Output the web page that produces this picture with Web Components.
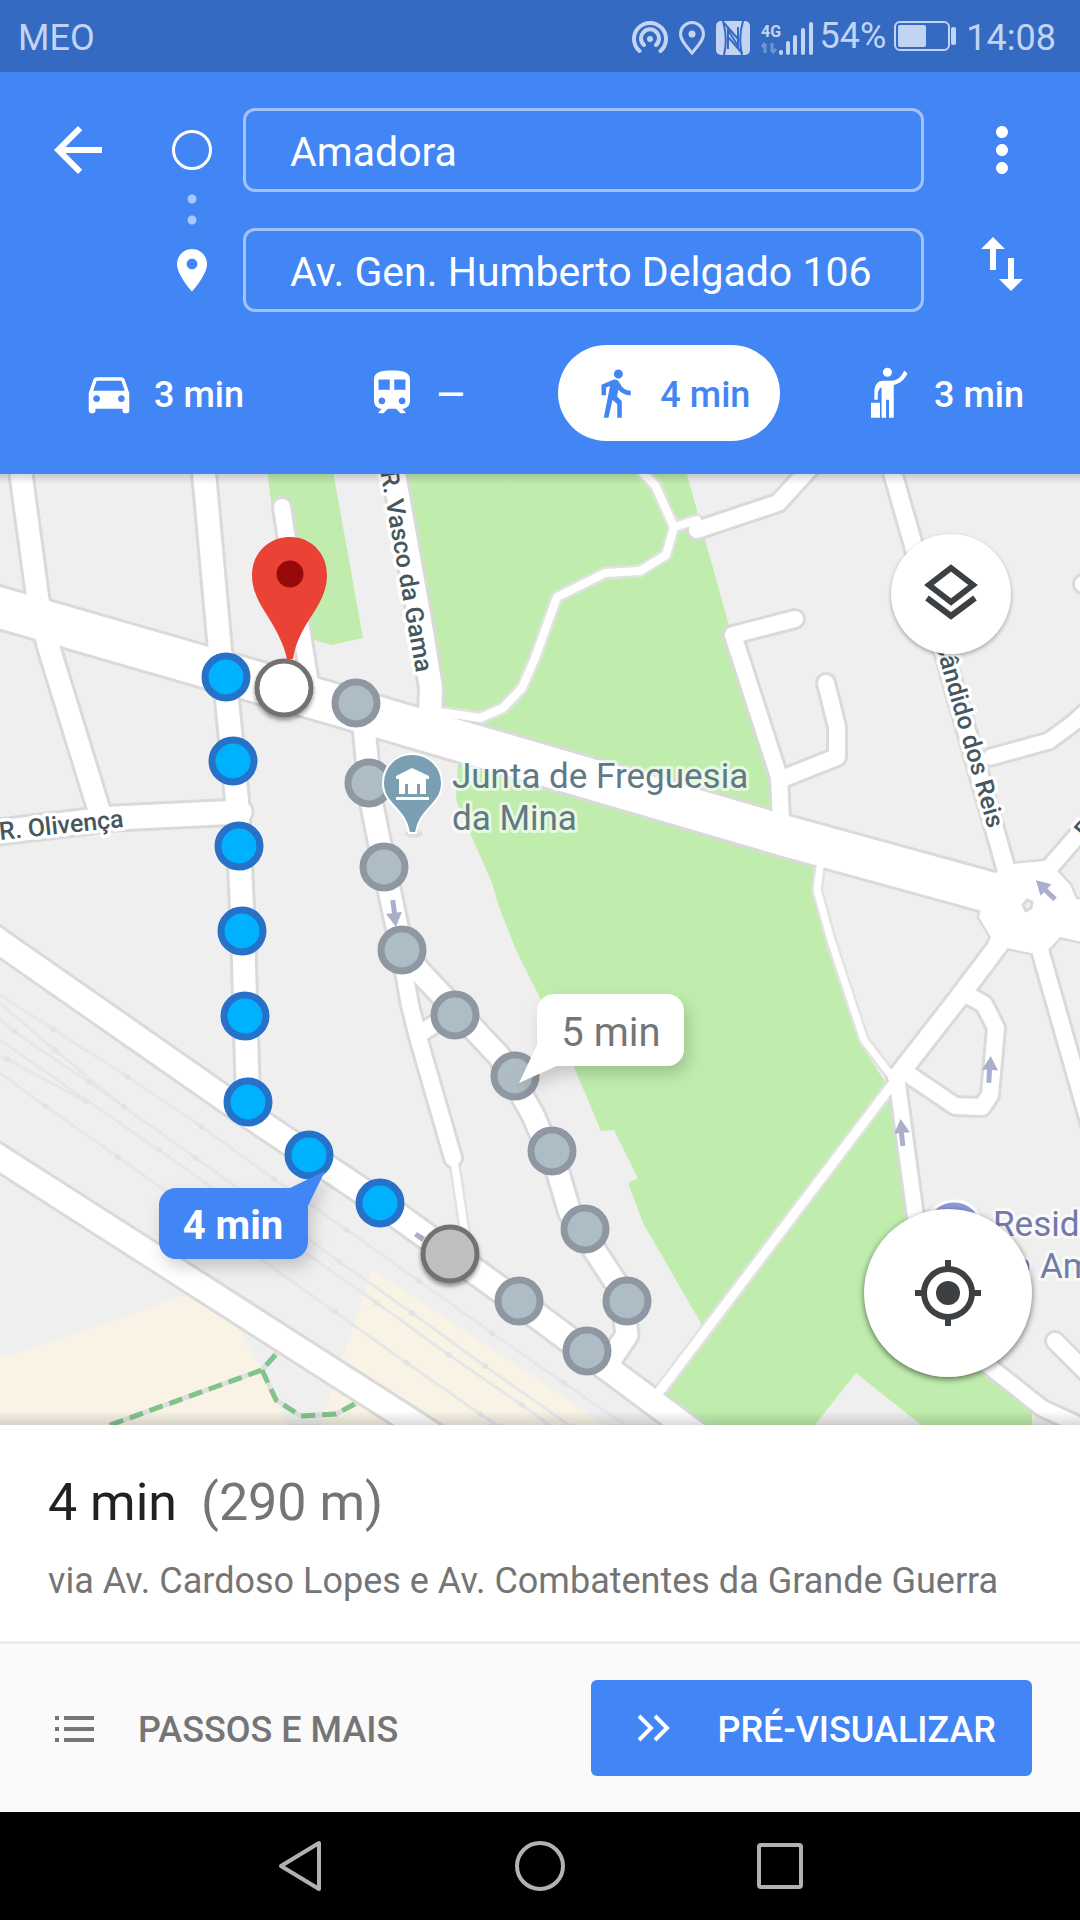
<!DOCTYPE html>
<html lang="pt">
<head>
<meta charset="utf-8">
<meta name="viewport" content="width=device-width, initial-scale=1">
<title>Amadora – Av. Gen. Humberto Delgado 106</title>
<style>
  body {
    margin: 0;
    background-color: white;
    font-family: Roboto, "Liberation Sans", sans-serif;
  }
</style>
</head>
<body>
<directions-app></directions-app>

<script>
class StatusBar extends HTMLElement {
  constructor() {
    super();
    this.attachShadow({ mode: "open" });
  }

  connectedCallback() {
    this.shadowRoot.innerHTML = /* html */ `
      <style>
        :host {
          display: flex;
          justify-content: space-between;
          align-items: center;
          box-sizing: border-box;
          height: 72px;
          padding: 4px 24px 0 18px;
          background-color: #346ac1;
          color: #c3d4f3;
          font-size: 36px;
          line-height: 40px;
        }

        .icons {
          display: flex;
          align-items: center;
          gap: 10px;
        }

        .power {
          display: flex;
          align-items: center;
          gap: 8px;
          margin: 0 -2px 0 -4px;
          padding-bottom: 4px;
        }

        svg {
          display: block;
        }
      </style>

      <span>${this.getAttribute("carrier")}</span>
      <div class="icons">
        <svg width="36" height="36" viewBox="0 0 36 36" fill="none" stroke="currentColor" stroke-width="4" stroke-linecap="round">
          <path d="M7.500 31A16 16 0 1 1 28.500 31M12 25A9 9 0 1 1 24 25" />
          <circle cx="18" cy="19" r="3" fill="currentColor" stroke="none" />
        </svg>
        <svg width="28" height="36" viewBox="0 0 28 36" fill="none" stroke="currentColor" stroke-width="3">
          <path d="M14 33C8 26 2.500 20 2.500 14a11.500 11.500 0 0 1 23 0C25.500 20 20 26 14 33z" />
          <circle cx="14" cy="14" r="3.500" fill="currentColor" stroke="none" />
        </svg>
        <svg width="34" height="34" viewBox="0 0 34 34">
          <rect width="34" height="34" rx="5" fill="currentColor" />
          <path d="M7 0Q12 17 8 34M27 0Q22 17 26 34" fill="none" stroke="#346ac1" stroke-width="2" />
          <path d="M12 28V9L22 25V6M12 17V28" fill="none" stroke="#346ac1" stroke-width="2" />
          <path d="M8 2L22 18M12 16L26 32" fill="none" stroke="#346ac1" stroke-width="2" />
        </svg>
        <svg width="54" height="36" viewBox="0 0 54 36">
          <text x="1" y="17" font-size="16" font-weight="700" fill="currentColor" font-family="Roboto">4G</text>
          <path d="M5 33V24M2 27l3-4M12 23v9M12 33l4-4" stroke="currentColor" stroke-width="3" opacity=".4" />
          <path d="M21 33v-1M28 33V23M35 33V17M43 33V10M51 33V4" stroke="currentColor" stroke-width="4" stroke-linecap="round" />
        </svg>
        <div class="power">
          <span>54%</span>
          <svg width="64" height="30" viewBox="0 0 64 30">
            <rect x="1" y="1" width="54" height="28" rx="5" fill="none" stroke="currentColor" stroke-width="2" />
            <rect x="4" y="4" width="28" height="22" rx="2" fill="currentColor" />
            <rect x="57" y="6" width="5" height="18" rx="2" fill="currentColor" />
          </svg>
        </div>
        <span>14:08</span>
      </div>
    `;
  }
}

class PlaceField extends HTMLElement {
  constructor() {
    super();
    this.attachShadow({ mode: "open" });
  }

  connectedCallback() {
    this.shadowRoot.innerHTML = /* html */ `
      <style>
        :host {
          display: block;
          min-width: 0;
        }

        input {
          display: block;
          box-sizing: border-box;
          width: 100%;
          height: 84px;
          padding: 4px 44px 0;
          background: none;
          border: 3px solid #a1c3fb;
          border-radius: 12px;
          color: white;
          font: inherit;
          font-size: 41px;
        }

        input:focus {
          outline: none;
          border-color: white;
        }
      </style>

      <input type="text" aria-label="${this.getAttribute("label")}" value="${this.getAttribute("value")}" />
    `;
  }
}

class TravelMode extends HTMLElement {
  constructor() {
    super();
    this.attachShadow({ mode: "open" });
  }

  connectedCallback() {
    this.shadowRoot.innerHTML = /* html */ `
      <style>
        :host {
          display: block;
        }

        button {
          display: flex;
          align-items: center;
          gap: 18px;
          height: 96px;
          padding: 0 30px;
          background: none;
          border: none;
          border-radius: 48px;
          color: white;
          font: inherit;
          font-size: 36px;
          font-weight: 500;
          white-space: nowrap;
          cursor: pointer;
        }

        :host([selected]) button {
          background-color: white;
          color: #4285f4;
        }

        span {
          padding-top: 4px;
        }

        ::slotted(svg) {
          display: block;
          width: 54px;
          height: 54px;
          fill: currentColor;
        }
      </style>

      <button type="button" aria-label="${this.getAttribute("label")}" aria-pressed="${this.hasAttribute("selected")}">
        <slot name="icon"></slot>
        <span><slot></slot></span>
      </button>
    `;
  }
}

class RouteHeader extends HTMLElement {
  constructor() {
    super();
    this.attachShadow({ mode: "open" });
  }

  connectedCallback() {
    this.shadowRoot.innerHTML = /* html */ `
      <style>
        :host {
          display: block;
          padding: 36px 0 33px;
          background-color: #4285f4;
          color: white;
        }

        .places {
          display: grid;
          grid-template-columns: 72px 129px minmax(0, 1fr) 72px;
          grid-template-rows: 84px 84px;
          row-gap: 36px;
          padding: 0 42px;
          align-items: center;
        }

        .icon-button {
          width: 72px;
          height: 72px;
          padding: 0;
          background: none;
          border: none;
          color: white;
          cursor: pointer;
        }

        .icon-button svg {
          display: block;
          width: 72px;
          height: 72px;
          fill: currentColor;
        }

        .swap {
          align-self: start;
        }

        .rail {
          grid-column: 2;
          grid-row: 1 / 3;
          justify-self: end;
          margin-right: 29px;
        }

        .rail svg {
          display: block;
        }

        place-field {
          grid-column: 3;
          margin-right: 42px;
        }

        .modes {
          display: grid;
          grid-template-columns: 283fr 224fr 274fr 220fr;
          justify-items: start;
          margin-top: 33px;
          padding: 0 26px 0 52px;
        }
      </style>

      <div class="places">
        <button class="icon-button" type="button" aria-label="Voltar">
          <svg viewBox="0 0 24 24"><path d="M20 11H7.830l5.590-5.590L12 4l-8 8 8 8 1.410-1.410L7.830 13H20v-2z" /></svg>
        </button>
        <div class="rail">
          <svg width="44" height="204" viewBox="0 0 44 204">
            <circle cx="22" cy="42" r="18.500" fill="none" stroke="white" stroke-width="3" />
            <circle cx="22" cy="91" r="4.500" fill="#a8c8ff" />
            <circle cx="22" cy="112" r="4.500" fill="#a8c8ff" />
            <path d="M22 141c-8.300 0-15 6.700-15 15 0 11.200 15 27.500 15 27.500s15-16.300 15-27.500c0-8.300-6.700-15-15-15zm0 20.400a5.400 5.400 0 1 1 0-10.800 5.400 5.400 0 0 1 0 10.800z" fill="white" />
          </svg>
        </div>
        <place-field label="Partida" value="Amadora"></place-field>
        <button class="icon-button" type="button" aria-label="Mais opções">
          <svg viewBox="0 0 24 24"><path d="M12 8c1.100 0 2-.9 2-2s-.9-2-2-2-2 .9-2 2 .9 2 2 2zm0 2c-1.100 0-2 .9-2 2s.9 2 2 2 2-.9 2-2-.9-2-2-2zm0 6c-1.100 0-2 .9-2 2s.9 2 2 2 2-.9 2-2-.9-2-2-2z" /></svg>
        </button>
        <place-field label="Destino" value="Av. Gen. Humberto Delgado 106"></place-field>
        <button class="icon-button swap" type="button" aria-label="Trocar partida e destino">
          <svg viewBox="0 0 24 24"><path d="M16 17.010V10h-2v7.010h-3L15 21l4-3.990h-3zM9 3L5 6.990h3V14h2V6.990h3L9 3z" /></svg>
        </button>
      </div>

      <div class="modes">
        <travel-mode label="Carro">
          <svg slot="icon" viewBox="0 0 24 24"><path d="M18.920 6.010C18.720 5.420 18.160 5 17.500 5h-11c-.66 0-1.210.42-1.420 1.010L3 12v8c0 .55.45 1 1 1h1c.55 0 1-.45 1-1v-1h12v1c0 .55.45 1 1 1h1c.55 0 1-.45 1-1v-8l-2.080-5.990zM6.500 16c-.83 0-1.500-.67-1.500-1.500S5.670 13 6.500 13s1.500.67 1.500 1.500S7.330 16 6.500 16zm11 0c-.83 0-1.500-.67-1.500-1.500s.67-1.500 1.500-1.500 1.500.67 1.500 1.500-.67 1.500-1.500 1.500zM5 11l1.500-4.500h11L19 11H5z" /></svg>
          3 min
        </travel-mode>
        <travel-mode label="Transportes públicos">
          <svg slot="icon" viewBox="0 0 24 24"><path d="M12 2c-4.420 0-8 .5-8 4v9.500C4 17.430 5.570 19 7.500 19L6 20.500v.5h2.230l2-2h3.540l2 2H18v-.5L16.500 19c1.930 0 3.500-1.570 3.500-3.500V6c0-3.500-3.580-4-8-4zM7.500 17c-.83 0-1.500-.67-1.500-1.500S6.670 14 7.500 14s1.500.67 1.500 1.500S8.330 17 7.500 17zm3.500-6.500H6V6h5v4.500zm2 0V6h5v4.500h-5zm3.500 6.500c-.83 0-1.500-.67-1.500-1.500s.67-1.500 1.500-1.500 1.500.67 1.500 1.500-.67 1.500-1.500 1.500z" /></svg>
          —
        </travel-mode>
        <travel-mode label="A pé" selected>
          <svg slot="icon" viewBox="0 0 24 24"><path d="M13.500 5.500c1.100 0 2-.9 2-2s-.9-2-2-2-2 .9-2 2 .9 2 2 2zM9.800 8.900L7 23h2.100l1.800-8 2.100 2v6h2v-7.500l-2.100-2 .6-3C14.800 12 16.800 13 19 13v-2c-1.900 0-3.500-1-4.300-2.400l-1-1.600c-.4-.6-1-1-1.700-1-.3 0-.5.1-.8.1L6 8.300V13h2V9.600l1.800-.7" /></svg>
          4 min
        </travel-mode>
        <travel-mode label="Táxi ou boleia">
          <svg slot="icon" viewBox="0 0 24 24">
            <circle cx="11.300" cy="2.800" r="2" />
            <path d="M9.500 6.500h3.500c2.800 0 4.600-1.700 5.700-4.500l1.500 1.200C19 5.800 17.200 7.800 14.100 8.400V23h-2.100v-8h-1.300v8H8.700V9.400C7.500 10 7 11.500 7 13v2H5.500v-3c0-3.600 1.300-5.500 4-5.500zM4 16.300h4v6.700H4z" />
          </svg>
          3 min
        </travel-mode>
      </div>
    `;
  }
}

class RouteMap extends HTMLElement {
  // Walking route, alternative route and one-way arrows, in map units
  #route = [[226, 677], [233, 761], [239, 846], [242, 931], [245, 1016], [248, 1102], [309, 1155], [380, 1203]];
  #alternative = [[356, 703], [369, 783], [384, 867], [402, 950], [455, 1015], [515, 1076], [552, 1151], [585, 1229], [627, 1301], [587, 1351], [519, 1301]];
  #arrows = [[394, 913, 172], [990, 1070, 3], [902, 1133, -6], [1046, 890, -46]];

  // Street centre lines by width
  #streets = [
    [40, "M-20 602L337 705 789 837 1040 906"],
    [24, "M-20 928L0 942 225 1099 380 1203 540 1318 700 1437"],
    [24, "M-20 1145L0 1158 417 1425 440 1440"],
    [21, "M17 450L21 474 38 600 48 645 102 820"],
    [23, "M-10 833L115 818 240 812"],
    [22, "M202 450L220 650 227 700 237 800 243 930 248 1100"],
    [22, "M392 450L394 474 420 620 431 688 430 715"],
    [16, "M282 507L290 560 311 690"],
    [21, "M362 705L371 800 385 870 402 950 420 972 500 1057 533 1115 558 1173 570 1213 622 1292 627 1335 605 1368"],
    [16, "M401 955L410 1005 418 1037 453 1158M418 1035L450 1014"],
    [16, "M697 530L778 503 812 466"],
    [16, "M795 619L733 635 779 777 781 820M826 683L837 727 837 757 779 780"],
    [17, "M887 452L893 474 1012 890"],
    [15, "M991 757L1049 741 1072 724 1090 708"],
    [16, "M1083 584L1100 590M1055 1341L1092 1378"],
    [16, "M1045 872L1051 866 1095 815"],
    [18, "M1000 943L957 1000 897 1077"],
    [16, "M967 995L984 1004 996 1028 990 1095 982 1107 955 1106 908 1074"],
    [16, "M1040 950L1092 1132"],
    [15, "M897 1080L915 1213 925 1300 985 1363 1042 1408 1100 1435"],
  ];

  #paths = [
    [8, "M440 712L480 718 503 708 522 688 535 658 557 597 605 573 640 571 666 555 674 527 655 485 636 466M674 527L697 520"],
    [7, "M821 860L817 890 831 940 864 1040 893 1078"],
    [9, "M892 1085L659 1392"],
    [7, "M454 1160L466 1240"],
  ];

  constructor() {
    super();
    this.attachShadow({ mode: "open" });
  }

  lines(items, extra, color) {
    return items
      .map(([width, d]) => `<path d="${d}" stroke="${color}" stroke-width="${width + extra}" />`)
      .join("");
  }

  dots(points, fill, stroke) {
    return points
      .map(([x, y]) => `<circle cx="${x}" cy="${y}" r="21" fill="${fill}" stroke="${stroke}" stroke-width="7" />`)
      .join("");
  }

  connectedCallback() {
    const blob = "M996 873L1004 865 1044 861 1058 872 1070 885 1076 899 1100 902V946L1060 937 1048 950 1031 953 1007 948 984 953 991 937 979 917 985 892z";

    this.shadowRoot.innerHTML = /* html */ `
      <style>
        :host {
          display: block;
          position: relative;
          overflow: hidden;
          min-height: 480px;
          background-color: #efefef;
        }

        .map {
          display: block;
          position: absolute;
          width: 100%;
          height: 100%;
        }

        .shade {
          position: absolute;
          inset: 0;
          background:
            linear-gradient(rgba(0, 0, 0, 0.16), transparent) top / 100% 10px no-repeat,
            linear-gradient(transparent, rgba(0, 0, 0, 0.14)) bottom / 100% 14px no-repeat;
          pointer-events: none;
        }

        .label {
          paint-order: stroke;
          stroke: white;
          stroke-linejoin: round;
        }

        .street {
          font-size: 25px;
          font-weight: 500;
          fill: #46565e;
          stroke-width: 7px;
        }

        .place {
          font-size: 35px;
          fill: #607985;
          stroke-width: 6px;
          stroke-opacity: 0.65;
        }

        .hotel {
          fill: #727aa8;
        }

        .time {
          font-size: 40px;
          text-anchor: middle;
        }

        .round {
          display: grid;
          place-items: center;
          position: absolute;
          padding: 0;
          background-color: white;
          border: none;
          border-radius: 50%;
          cursor: pointer;
        }

        .layers {
          top: 60px;
          right: 69px;
          width: 120px;
          height: 120px;
          box-shadow: 0 2px 4px rgba(0, 0, 0, 0.3);
        }

        .locate {
          right: 48px;
          bottom: 48px;
          width: 168px;
          height: 168px;
          box-shadow: 0 2px 6px rgba(0, 0, 0, 0.55);
        }
      </style>

      <svg class="map" viewBox="0 474 1080 951" preserveAspectRatio="xMidYMid slice" font-family="Roboto, sans-serif">
        <defs>
          <filter id="shadow" x="-30%" y="-30%" width="160%" height="180%">
            <feDropShadow dx="4" dy="8" stdDeviation="8" flood-opacity=".18" />
          </filter>
          <filter id="small" x="-30%" y="-30%" width="160%" height="160%">
            <feDropShadow dx="0" dy="3" stdDeviation="2" flood-opacity=".4" />
          </filter>
        </defs>

        <g fill="#c0edad">
          <path d="M266 460H331L363 638 332 645 313 640 272 510z" />
          <path d="M404 460H683L728 622 779 777V830L822 860 814 890 827 940 860 1043 884 1080 895 1097 915 1220 930 1300 981 1373 1032 1413V1440H940L856 1373 803 1440H702L650 1393 702 1325 643 1223 628 1183 638 1178 614 1130 601 1131 574 1067 540 998 516 950 499 907 492 883 473 840 456 800 458 760 436 700z" />
        </g>
        <g fill="#f9f3e6">
          <path d="M0 1353L7 1357 186 1295 241 1330 250 1350 263 1370 275 1400 297 1440H0z" />
          <path d="M372 1270L540 1380 625 1440H315z" />
        </g>

        <g fill="none" stroke="#e5e7e9" stroke-width="3">
          <path d="M0 995L53 1029 128 1077 202 1127 274 1179 347 1230 419 1281 492 1333 564 1383 640 1435" />
          <path d="M0 1003L55 1050 124 1107 196 1158 340 1262 412 1313 485 1366 590 1440" />
          <path d="M0 1020L15 1032 89 1082 124 1107M0 1040L86 1100 159 1150 377 1303 449 1355 522 1405 570 1440" />
          <path d="M0 1057L7 1059 86 1102M0 1073L45 1106 118 1157 335 1312 407 1363 480 1414 520 1440" />
        </g>
        <g fill="#e1e4e6">
          ${[[53, 1029], [128, 1077], [202, 1127], [274, 1179], [347, 1230], [419, 1281], [492, 1333], [564, 1383], [55, 1050], [124, 1107], [196, 1158], [340, 1262], [412, 1313], [485, 1366], [15, 1032], [89, 1082], [86, 1101], [159, 1150], [377, 1303], [449, 1355], [522, 1405], [7, 1059], [45, 1106], [118, 1157], [335, 1312], [407, 1363], [480, 1414]]
            .map(([x, y]) => `<circle cx="${x}" cy="${y}" r="3" />`)
            .join("")}
        </g>

        <g fill="none" stroke-linejoin="round" stroke-width="5">
          <path d="M110 1425L262 1370 277 1353M262 1370L276 1400 301 1416 336 1414 362 1400" stroke="#e0e0e0" />
          <path d="M110 1425L262 1370 277 1353M262 1370L276 1400 301 1416 336 1414 362 1400" stroke="#81c48b" stroke-dasharray="14 7" />
        </g>

        <g fill="none" stroke-linecap="round" stroke-linejoin="round">
          ${this.lines(this.#paths, 5, "#e2e2e2")}
          ${this.lines(this.#streets, 6, "#dadada")}
          <path d="${blob}" fill="#dadada" stroke="#dadada" stroke-width="5" />
          ${this.lines(this.#paths, 0, "white")}
          ${this.lines(this.#streets, 0, "white")}
          <path d="${blob}" fill="white" />
          <path d="M1023 905l4-5 5 2-1 6-5 3z" fill="#efefef" stroke="#dadada" stroke-width="3" />
        </g>

        <g fill="#aab0cc">
          ${this.#arrows
            .map(([x, y, turn]) => `<path d="M0-14L8 0H2V13H-3V0H-8z" transform="translate(${x} ${y}) rotate(${turn})" />`)
            .join("")}
          <path d="M417 1232l8 5-3 5-8-6z" />
        </g>

        <g class="label street">
          <text transform="translate(416 673) rotate(80)" text-anchor="end">R. Vasco da Gama</text>
          <text transform="translate(0 840) rotate(-6)">R. Olivença</text>
          <text transform="translate(988 829) rotate(74)" text-anchor="end">Cândido dos Reis</text>
          <text transform="translate(1086 840) rotate(-50)">R</text>
        </g>

        ${this.dots(this.#alternative, "#aebdc5", "#8f97a2")}
        ${this.dots(this.#route, "#00b1ff", "#2672c8")}
        <circle cx="450" cy="1254" r="27" fill="#bfbfbf" stroke="#727272" stroke-width="5" filter="url(#small)" />
        <circle cx="284" cy="688" r="27" fill="white" stroke="#727272" stroke-width="5" filter="url(#small)" />

        <path d="M290 537c-21 0-38 16-38 38 0 26 19 41 29 66 4 9 5 14 6 18h6c1-4 1-9 5-18 10-25 29-40 29-66 0-22-16-38-37-38z" fill="#ea4335" />
        <circle cx="290" cy="574" r="13.500" fill="#960a0a" />

        <ellipse cx="414" cy="834" rx="9" ry="4" fill="#dedede" />
        <path d="M412 754c-17 0-29 13-29 29 0 22 22 24 26 50h7c4-26 26-28 26-50 0-16-13-29-30-29z" fill="#7b9fb2" stroke="white" stroke-width="2" />
        <path d="M412 768l17 8v3h-33v-3zM399 779h27v15h-6v-10h-3v10h-9v-10h-3v10h-6zM396 797h33v3h-33z" fill="white" />
        <g class="label place">
          <text x="452" y="788">Junta de Freguesia</text>
          <text x="452" y="830">da Mina</text>
        </g>

        <circle cx="954" cy="1230" r="29" fill="#8d99dc" stroke="white" stroke-width="3" />
        <g class="label place hotel">
          <text x="993" y="1236">Resid</text>
          <text x="1012" y="1278">n Am</text>
        </g>

        <g filter="url(#shadow)">
          <path d="M554 994H667a17 17 0 0 1 17 17V1049a17 17 0 0 1-17 17H556L519 1083 537 1045V1011a17 17 0 0 1 17-17z" fill="white" />
        </g>
        <text class="time" x="611" y="1046" fill="#757575">5 min</text>
        <g filter="url(#shadow)">
          <path d="M176 1188H290L325 1171 308 1206V1242a17 17 0 0 1-17 17H176a17 17 0 0 1-17-17V1205a17 17 0 0 1 17-17z" fill="#4285f4" />
        </g>
        <text class="time" x="233" y="1239" fill="white" font-weight="700">4 min</text>
      </svg>

      <div class="shade"></div>

      <button class="round layers" type="button" aria-label="Camadas">
        <svg width="72" height="72" viewBox="0 0 72 72" fill="none" stroke="#3c4043" stroke-width="6">
          <path d="M36 10L58 27 36 44 14 27zM12 40L36 58 60 40" />
        </svg>
      </button>
      <button class="round locate" type="button" aria-label="A minha localização">
        <svg width="72" height="72" viewBox="0 0 72 72" fill="none" stroke="#3c4043" stroke-width="6">
          <circle cx="36" cy="36" r="24" />
          <circle cx="36" cy="36" r="12" fill="#3c4043" stroke="none" />
          <path d="M36 3V12M36 60V69M3 36H12M60 36H69" />
        </svg>
      </button>
    `;
  }
}

class RouteSummary extends HTMLElement {
  constructor() {
    super();
    this.attachShadow({ mode: "open" });
  }

  connectedCallback() {
    this.shadowRoot.innerHTML = /* html */ `
      <style>
        :host {
          display: block;
          background-color: white;
          color: #757575;
        }

        .info {
          padding: 46px 48px 36px;
        }

        h1 {
          display: flex;
          gap: 24px;
          margin: 0 0 22px;
          font-size: 52px;
          font-weight: 400;
          line-height: 64px;
        }

        h1 > .duration {
          color: #212121;
        }

        p {
          margin: 0;
          font-size: 36px;
          line-height: 48px;
        }

        .actions {
          display: flex;
          justify-content: space-between;
          padding: 36px 48px;
          background-color: #fafafa;
          border-top: 3px solid #ececec;
        }

        button {
          display: flex;
          align-items: center;
          height: 96px;
          background: none;
          border: none;
          border-radius: 6px;
          color: inherit;
          font: inherit;
          font-size: 36px;
          font-weight: 500;
          cursor: pointer;
        }

        button > span {
          padding-top: 4px;
        }

        .steps {
          gap: 36px;
          padding: 0;
        }

        .preview {
          gap: 36px;
          padding: 0 36px;
          background-color: #4285f4;
          color: white;
        }
      </style>

      <div class="info">
        <h1><span class="duration">4 min</span><span>(290 m)</span></h1>
        <p>via Av. Cardoso Lopes e Av. Combatentes da Grande Guerra</p>
      </div>
      <div class="actions">
        <button class="steps" type="button">
          <svg width="54" height="54" viewBox="0 0 54 54" fill="currentColor">
            <path d="M7 15h4v4H7zM16 15h30v4H16zM7 26h4v4H7zM16 26h30v4H16zM7 37h4v4H7zM16 37h30v4H16z" />
          </svg>
          <span>PASSOS E MAIS</span>
        </button>
        <button class="preview" type="button">
          <svg width="54" height="54" viewBox="0 0 54 54" fill="none" stroke="currentColor" stroke-width="4">
            <path d="M12 15L24 27 12 39M28 15L40 27 28 39" />
          </svg>
          <span>PRÉ-VISUALIZAR</span>
        </button>
      </div>
    `;
  }
}

class SystemNav extends HTMLElement {
  constructor() {
    super();
    this.attachShadow({ mode: "open" });
  }

  connectedCallback() {
    this.shadowRoot.innerHTML = /* html */ `
      <style>
        :host {
          display: flex;
          justify-content: center;
          align-items: center;
          gap: 180px;
          height: 108px;
          background-color: black;
        }

        button {
          width: 60px;
          height: 60px;
          padding: 0;
          background: none;
          border: none;
          cursor: pointer;
        }

        svg {
          display: block;
          fill: none;
          stroke: #b2b2b2;
          stroke-width: 4px;
          stroke-linejoin: round;
        }
      </style>

      <button type="button" aria-label="Voltar">
        <svg width="60" height="60" viewBox="0 0 60 60"><path d="M49 7V53L11 30z" /></svg>
      </button>
      <button type="button" aria-label="Ecrã principal">
        <svg width="60" height="60" viewBox="0 0 60 60"><circle cx="30" cy="30" r="23" /></svg>
      </button>
      <button type="button" aria-label="Recentes">
        <svg width="60" height="60" viewBox="0 0 60 60"><rect x="9" y="9" width="42" height="42" rx="2" /></svg>
      </button>
    `;
  }
}

class DirectionsApp extends HTMLElement {
  constructor() {
    super();
    this.attachShadow({ mode: "open" });
  }

  connectedCallback() {
    this.shadowRoot.innerHTML = /* html */ `
      <style>
        :host {
          display: flex;
          flex-direction: column;
          min-height: 100vh;
        }

        route-map {
          flex: 1;
        }
      </style>

      <status-bar carrier="MEO"></status-bar>
      <route-header></route-header>
      <route-map></route-map>
      <route-summary></route-summary>
      <system-nav></system-nav>
    `;
  }
}

customElements.define("status-bar", StatusBar);
customElements.define("place-field", PlaceField);
customElements.define("travel-mode", TravelMode);
customElements.define("route-header", RouteHeader);
customElements.define("route-map", RouteMap);
customElements.define("route-summary", RouteSummary);
customElements.define("system-nav", SystemNav);
customElements.define("directions-app", DirectionsApp);
</script>
</body>
</html>
